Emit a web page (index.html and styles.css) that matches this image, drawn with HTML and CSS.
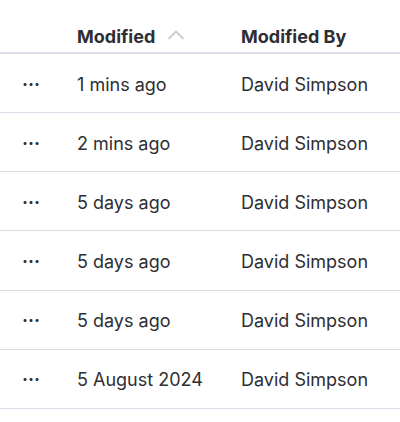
FILE: index.html
```html
<!DOCTYPE html>
<html lang="en">
<head>
  <meta charset="UTF-8" />
  <title>Files</title>
  <link rel="stylesheet" href="styles.css">
</head>
<body>

<section class="file-table">
  <div class="row head">
    <div class="cell actions"></div>
    <div class="cell modified">Modified
      <svg class="sort" width="18" height="10" viewBox="0 0 18 10"><path d="M1.5 9 L9 1.5 L16.5 9" fill="none" stroke="#cfcfd4" stroke-width="2"/></svg>
    </div>
    <div class="cell by">Modified By</div>
  </div>
  <div class="row"><div class="cell actions">···</div><div class="cell modified">1 mins ago</div><div class="cell by">David Simpson</div></div>
  <div class="row"><div class="cell actions">···</div><div class="cell modified">2 mins ago</div><div class="cell by">David Simpson</div></div>
  <div class="row"><div class="cell actions">···</div><div class="cell modified">5 days ago</div><div class="cell by">David Simpson</div></div>
  <div class="row"><div class="cell actions">···</div><div class="cell modified">5 days ago</div><div class="cell by">David Simpson</div></div>
  <div class="row"><div class="cell actions">···</div><div class="cell modified">5 days ago</div><div class="cell by">David Simpson</div></div>
  <div class="row"><div class="cell actions">···</div><div class="cell modified">5 August 2024</div><div class="cell by">David Simpson</div></div>
</section>

</body>
</html>
```

FILE: styles.css
```css
* {
  margin: 0;
  padding: 0;
  box-sizing: border-box;
}

body {
  background: #ffffff;
  color: #2e2e33;
  font-family: 'Inter', sans-serif;
  font-size: 18px;
}

.file-table {
  width: 100%;
}

.row {
  display: grid;
  grid-template-columns: 77px 164px 1fr;
  align-items: center;
  height: 59.17px;
  padding-top: 2px;
  border-bottom: 1px solid #dcdae6;
}

.row.head {
  height: 54px;
  padding-top: 20px;
  border-bottom: 2px solid #dcdae6;
  font-weight: 700;
}

.actions {
  padding-left: 22px;
  font-weight: 700;
}

.modified {
  display: flex;
  align-items: center;
  gap: 12px;
}

.sort {
  margin-top: -2px;
}
```
